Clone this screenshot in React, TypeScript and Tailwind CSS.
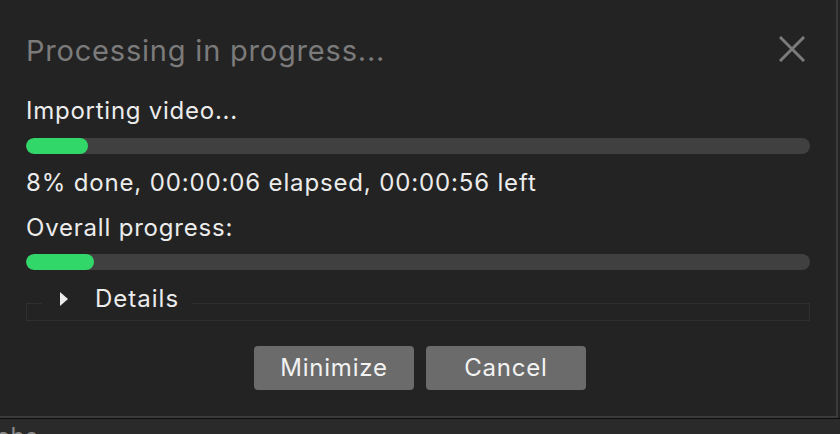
import React from "react";

export default function App() {
  const font = { fontFamily: "Inter, 'Noto Sans', sans-serif" };
  return (
    <div className="w-[840px] h-[434px] overflow-hidden bg-[#232323] flex flex-col" style={font}>
      <div className="w-[838px] h-[418px] shrink-0 bg-[#232323] border-r-2 border-b-2 border-[#3b3b3b] flex flex-col">
        <div className="flex items-start justify-between pl-[26px] pr-[31px] pt-[37px]">
          <div className="text-[29px] leading-none tracking-[0.8px] text-[#7b7b7b] -mt-[1px]">Processing in progress...</div>
          <svg width="26" height="26" viewBox="0 0 26 26" className="-mt-[1px]">
            <path d="M2 2 L24 24 M24 2 L2 24" stroke="#7b7b7b" strokeWidth="3" strokeLinecap="square" />
          </svg>
        </div>
        <div className="pl-[26px] pr-[26px] flex flex-col">
          <div className="mt-[34px] text-[24px] leading-none tracking-[0.75px] text-[#ececec]">Importing video...</div>
          <div className="mt-[15px] h-[16px] rounded-full bg-[#404040] overflow-hidden">
            <div className="h-full w-[62px] rounded-full bg-[#32d76a]" />
          </div>
          <div className="mt-[17px] text-[24px] leading-none tracking-[0.85px] text-[#ececec]">8% done, 00:00:06 elapsed, 00:00:56 left</div>
          <div className="mt-[21px] text-[24px] leading-none tracking-[0.8px] text-[#ececec]">Overall progress:</div>
          <div className="mt-[14px] h-[16px] rounded-full bg-[#404040] overflow-hidden">
            <div className="h-full w-[68px] rounded-full bg-[#32d76a]" />
          </div>
          <fieldset className="mt-[16px] border border-[#2f2f2f] h-[35px]">
            <legend className="ml-[15px] pl-[18px] pr-[13px] pb-[9px] text-[24px] leading-none tracking-[1px] text-[#ececec]">
              <span className="inline-flex items-center">
                <svg width="8" height="14" viewBox="0 0 8 14" className="mr-[27px]">
                  <path d="M0 0 L8 7 L0 14 Z" fill="#ececec" />
                </svg>
                Details
              </span>
            </legend>
          </fieldset>
        </div>
        <div className="mt-[25px] flex justify-center gap-[12px] pl-[4px]">
          <button className="w-[160px] h-[44px] rounded-[4px] bg-[#6b6b6b] text-[24px] leading-none tracking-[0.8px] text-[#f2f2f2]">Minimize</button>
          <button className="w-[160px] h-[44px] rounded-[4px] bg-[#6b6b6b] text-[24px] leading-none tracking-[0.8px] text-[#f2f2f2]">Cancel</button>
        </div>
      </div>
      <div className="h-[1px] w-full bg-[#0c0c0c] shrink-0" />
      <div className="flex-1 bg-[#2a2a2a] pl-0 pt-[6px]">
        <div className="-ml-[4px] text-[24px] leading-none text-[#8a8a8a]">ohe</div>
      </div>
    </div>
  );
}
